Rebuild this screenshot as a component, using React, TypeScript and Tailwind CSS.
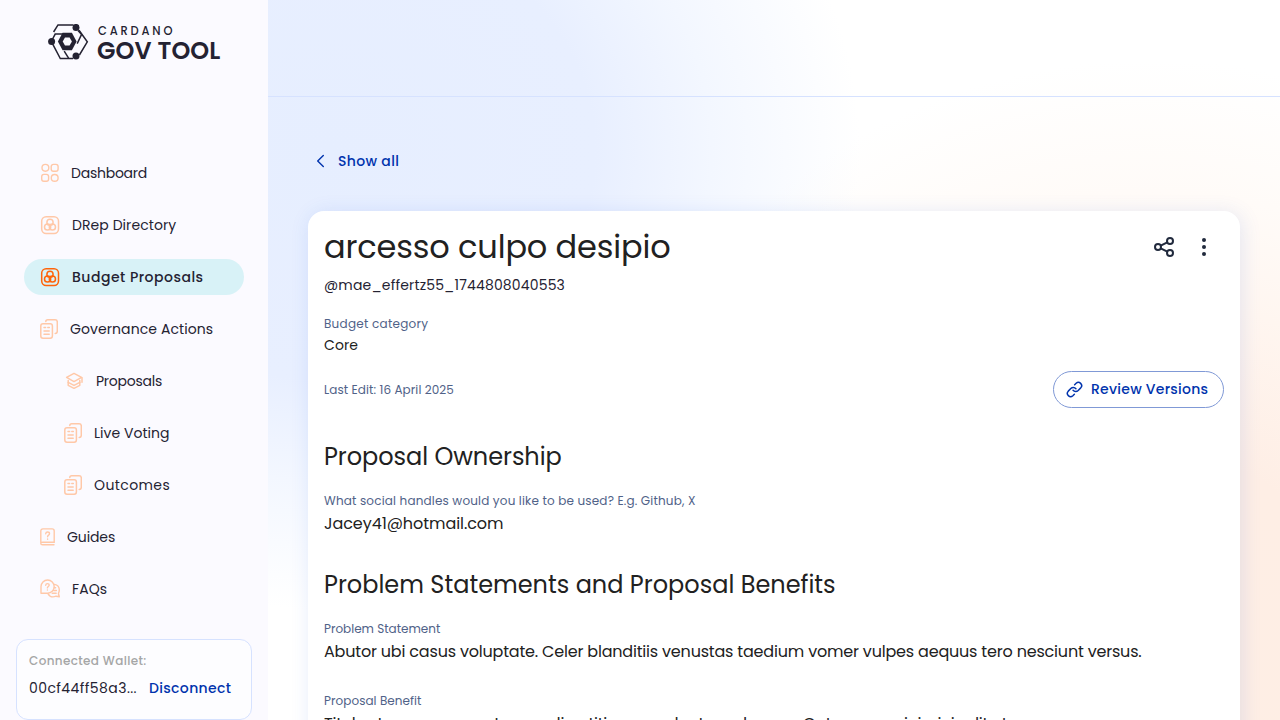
import type { ReactNode } from "react";

const PEACH = "#FFC8A8";
const ORANGE = "#FF640A";

function Logo() {
  return (
    <svg width="41" height="36" viewBox="0 0 41 36" fill="none" stroke="#242232" strokeWidth="1.5">
      <path d="M5.6 8 10 .9h15.5" />
      <path d="M3.8 16.5 7.2 10.1h8.3" />
      <path d="M31 6.2 39.3 17.8 31.4 31" />
      <path d="M30 6.5 33.6 10.4 29.2 19.6" />
      <path d="M4.2 19.2 12.3 34.5h3.5H25" />
      <path d="M16.2 27.2l4.4 7" />
      <path d="M9.9 17.5 14.6 8.8h9.3L28.6 17.5 23.9 26.2h-9.3z" fill="#242232" stroke="none" />
      <path d="M14.7 17.5l2.3-4.1h4.6l2.3 4.1-2.3 4.1H17z" fill="#FBFAFF" stroke="none" />
      <g fill="#242232" stroke="none">
        <circle cx="28" cy="3.4" r="3.5" />
        <circle cx="3.6" cy="17.5" r="3.5" />
        <circle cx="28" cy="32.1" r="3.5" />
      </g>
    </svg>
  );
}

function DashboardIcon() {
  return (
    <svg width="19" height="20" viewBox="0 0 19 20" fill="none" stroke={PEACH} strokeWidth="1.4">
      <circle cx="5.4" cy="4.8" r="3.4" />
      <rect x="11.2" y="1.4" width="6.9" height="6.9" rx="2.2" />
      <rect x="1.7" y="11.4" width="6.9" height="6.9" rx="2.2" />
      <circle cx="14.7" cy="14.9" r="3.4" />
    </svg>
  );
}

function CirclesIcon({ color }: { color: string }) {
  return (
    <svg width="20" height="20" viewBox="0 0 20 20" fill="none" stroke={color} strokeWidth="1.5">
      <rect x="1.7" y="1.7" width="16.8" height="16.8" rx="4.4" />
      <circle cx="10" cy="7.3" r="3.1" />
      <circle cx="7.6" cy="12" r="3.1" />
      <circle cx="12.4" cy="12" r="3.1" />
    </svg>
  );
}

function DocsIcon() {
  return (
    <svg width="18" height="20" viewBox="0 0 18 20" fill="none" stroke={PEACH} strokeWidth="1.5" strokeLinecap="round">
      <path d="M5.8 2.6C5.8 1.3 6.5.8 7.7.8h7.4c1.4 0 2.2.8 2.2 2.2v9.2c0 1.4-.8 2.2-2.1 2.2" />
      <rect x=".8" y="4.8" width="11.6" height="14.4" rx="2.2" />
      <path d="M4 8.5h1.6M7.8 8.5h1.5M4 11.9h5.2M4 15.2h5.2" />
    </svg>
  );
}

function LayersIcon() {
  return (
    <svg width="20" height="20" viewBox="0 0 20 20" fill="none" stroke={PEACH} strokeWidth="1.5" strokeLinecap="round" strokeLinejoin="round">
      <path d="M2.6 6.4 10 2.4l7.6 4-7.6 4.2z" />
      <path d="M18 6.8v4.4" />
      <path d="M4.2 9.6v1.8l5.8 3 5.8-3V9.6" />
      <path d="M4.2 11.5v2.8l5.8 3 5.8-3v-2.8" />
    </svg>
  );
}

function GuideIcon() {
  return (
    <svg width="15" height="18" viewBox="0 0 15 18" fill="none" stroke={PEACH} strokeWidth="1.4" strokeLinecap="round">
      <path d="M.8 14.8V3C.8 1.6 1.6.9 2.9.9h9.2c1.3 0 2.1.7 2.1 2v11.3H2.6C1.5 14.2.8 14.7.8 15.5s.7 1.3 1.8 1.3h11.4" />
      <path d="M5.7 5.8c.1-1.2.8-1.8 1.9-1.8s1.9.7 1.9 1.7c0 1.4-1.9 1.5-1.9 3M7.6 11v.2" />
    </svg>
  );
}

function FaqIcon() {
  return (
    <svg width="20" height="20" viewBox="0 0 20 20" fill="none" stroke={PEACH} strokeWidth="1.4" strokeLinecap="round" strokeLinejoin="round">
      <path d="M1 14V7.6a6.6 6.6 0 1 1 6.6 6.6H1z" />
      <path d="M5.7 6.2c.1-1.1.8-1.6 1.7-1.6s1.8.6 1.8 1.5c0 1.4-1.8 1.4-1.8 2.8M7.4 11v.1" />
      <path d="M14.4 5.4c3 .5 4.9 2.7 4.9 5.7 0 1.6-.5 2.6-.9 3.4l.9 3.3-3.2-.6c-3.4 1.3-6.6.2-8-2.4" />
      <path d="M14.4 8.8h1.2M13.6 11.5h2.8M12.2 14.2h4" />
    </svg>
  );
}

type Item = { label: string; icon: ReactNode; tracking: string; active?: boolean; nested?: boolean };

const items: Item[] = [
  { label: "Dashboard", icon: <DashboardIcon />, tracking: "tracking-[-0.24px]" },
  { label: "DRep Directory", icon: <CirclesIcon color={PEACH} />, tracking: "tracking-[0.07px]" },
  { label: "Budget Proposals", icon: <CirclesIcon color={ORANGE} />, tracking: "tracking-[0.5px]", active: true },
  { label: "Governance Actions", icon: <DocsIcon />, tracking: "tracking-[0.09px]" },
  { label: "Proposals", icon: <LayersIcon />, tracking: "tracking-[-0.25px]", nested: true },
  { label: "Live Voting", icon: <DocsIcon />, tracking: "tracking-[0.04px]", nested: true },
  { label: "Outcomes", icon: <DocsIcon />, tracking: "tracking-[0.4px]", nested: true },
  { label: "Guides", icon: <GuideIcon />, tracking: "tracking-[-0.1px]" },
  { label: "FAQs", icon: <FaqIcon />, tracking: "tracking-[0.1px]" },
];

function Sidebar() {
  return (
    <aside className="flex h-full w-[268px] shrink-0 flex-col bg-[#FBFAFF] text-[#242232]">
      <div className="flex h-[59px] items-start gap-[9px] pt-6 pl-12">
        <Logo />
        <div className="flex flex-col">
          <span className="h-[14px] text-[11.5px] leading-[14px] font-medium tracking-[2.8px]">CARDANO</span>
          <span className="ml-[-1px] text-[24px] leading-[25px] font-semibold tracking-[0.1px] whitespace-nowrap">GOV TOOL</span>
        </div>
      </div>
      <nav className="mt-24 flex flex-col gap-4 px-6">
        {items.map((item) => (
          <a
            key={item.label}
            className={`flex h-9 items-center gap-3 rounded-full text-sm ${item.nested ? "pl-10" : "pl-4"} ${
              item.active ? "bg-[#D8F2F7] font-medium" : "font-normal"
            }`}
          >
            {item.icon}
            <span className={item.tracking}>{item.label}</span>
          </a>
        ))}
      </nav>
      <div className="mx-4 mt-8 h-[81px] shrink-0 rounded-xl border border-[#D6E2FF] bg-[#FDFDFF] px-3 pt-3">
        <p className="text-xs leading-[18px] font-medium tracking-[0.36px] text-[#A5A6A6]">Connected Wallet:</p>
        <div className="mt-[6px] flex items-center text-sm leading-6">
          <span className="w-[120px] tracking-[0.42px]">00cf44ff58a3...</span>
          <button className="font-medium tracking-[0.34px] text-[#0033AD]">Disconnect</button>
        </div>
      </div>
    </aside>
  );
}

function Field({ label, labelTracking, tracking, children }: { label: string; labelTracking: string; tracking: string; children: ReactNode }) {
  return (
    <div>
      <p className={`text-xs leading-[18px] text-[#506288] ${labelTracking}`}>{label}</p>
      <p className={`mt-[2px] text-base leading-6 whitespace-nowrap text-[#212121] ${tracking}`}>{children}</p>
    </div>
  );
}

function ProposalCard() {
  return (
    <article className="mx-10 mt-[38px] h-[640px] shrink-0 rounded-2xl bg-white px-4 shadow-[2px_2px_20px_0px_rgba(47,98,220,0.13)]">
      <div className="flex h-[72px] items-center justify-between">
        <h1 className="text-[32px] leading-[42px] tracking-[-0.15px] text-[#212121]">arcesso culpo desipio</h1>
        <div className="flex items-center">
          <button className="flex size-10 items-center justify-center">
            <svg width="24" height="24" viewBox="0 0 24 24" fill="none" stroke="#212A3D" strokeWidth="2">
              <circle cx="18" cy="6" r="3" />
              <circle cx="6" cy="12" r="3" />
              <circle cx="18" cy="18" r="3" />
              <path d="M8.7 10.7 15.3 7.3M8.7 13.3l6.6 3.4" />
            </svg>
          </button>
          <button className="flex size-10 items-center justify-center">
            <svg width="24" height="24" viewBox="0 0 24 24" fill="#212A3D">
              <circle cx="12" cy="5" r="2" />
              <circle cx="12" cy="12" r="2" />
              <circle cx="12" cy="19" r="2" />
            </svg>
          </button>
        </div>
      </div>
      <p className="mt-[-8px] text-sm leading-[21px] tracking-[0.16px] text-[#242232]">@mae_effertz55_1744808040553</p>
      <p className="mt-[19px] text-xs leading-[18px] tracking-[0.25px] text-[#506288]">Budget category</p>
      <p className="text-sm leading-6 tracking-[0.08px] text-[#212121]">Core</p>
      <div className="mt-[14px] flex h-[37px] items-center justify-between">
        <p className="text-xs leading-[18px] tracking-[0.09px] text-[#506288]">Last Edit: 16 April 2025</p>
        <button className="flex h-[37px] w-[171px] items-center gap-2 rounded-full border border-[#8099D6] pl-3 text-sm font-medium tracking-[0.25px] whitespace-nowrap text-[#0033AD]">
          <svg width="17" height="17" viewBox="0 0 24 24" fill="none" stroke="#0033AD" strokeWidth="2.1" strokeLinecap="round" strokeLinejoin="round">
            <path d="M10 13a5 5 0 0 0 7.2.3l3.6-3.6a4.6 4.6 0 0 0-6.5-6.5l-2.1 2.1" />
            <path d="M14 11a5 5 0 0 0-7.2-.3l-3.6 3.6a4.6 4.6 0 0 0 6.5 6.5l2.1-2.1" />
          </svg>
          <span className="pb-px">Review Versions</span>
        </button>
      </div>
      <h2 className="mt-[33px] text-2xl leading-8 tracking-[-0.05px] text-[#212121]">Proposal Ownership</h2>
      <div className="mt-[19px]">
        <Field
          label="What social handles would you like to be used? E.g. Github, X"
          labelTracking="tracking-[0.17px]"
          tracking="tracking-[-0.06px]"
        >
          Jacey41@hotmail.com
        </Field>
      </div>
      <h2 className="mt-[33px] text-2xl leading-8 text-[#212121]">Problem Statements and Proposal Benefits</h2>
      <div className="mt-[19px] flex flex-col gap-7">
        <Field label="Problem Statement" labelTracking="tracking-normal" tracking="tracking-[-0.19px]">
          Abutor ubi casus voluptate. Celer blanditiis venustas taedium vomer vulpes aequus tero nesciunt versus.
        </Field>
        <Field label="Proposal Benefit" labelTracking="tracking-[0.05px]" tracking="tracking-[-0.23px]">
          Titulus tersus summa tero audi petitionem adeptus odeo cur. Catena vero inimici edit et.
        </Field>
      </div>
    </article>
  );
}

export default function App() {
  return (
    <div className="flex h-[720px] w-[1280px] overflow-hidden bg-white font-[Poppins,Inter,sans-serif]">
      <Sidebar />
      <main className="flex h-full min-w-0 flex-1 flex-col overflow-hidden bg-[radial-gradient(ellipse_530px_460px_at_62px_150px,#E6EEFF_0%,#E8EFFF_50%,#F3F7FF_72%,rgba(255,255,255,0)_100%),radial-gradient(ellipse_600px_600px_at_882px_660px,#FEEEE4_0%,#FEEEE5_35%,#FFF6F0_60%,#FFFBF8_78%,#FFFFFF_100%)]">
        <header className="h-[97px] shrink-0 border-b border-[#D6E2FF]" />
        <div className="mt-[52px] ml-10 flex h-6 shrink-0 items-center gap-2">
          <svg width="22" height="22" viewBox="0 0 22 22" fill="none" stroke="#0033AD" strokeWidth="1.4" strokeLinecap="round" strokeLinejoin="round">
            <path d="m15.3 5.5-5.6 5.5 5.6 5.5" />
          </svg>
          <span className="text-sm font-medium tracking-[0.33px] text-[#0033AD]">Show all</span>
        </div>
        <ProposalCard />
      </main>
    </div>
  );
}
